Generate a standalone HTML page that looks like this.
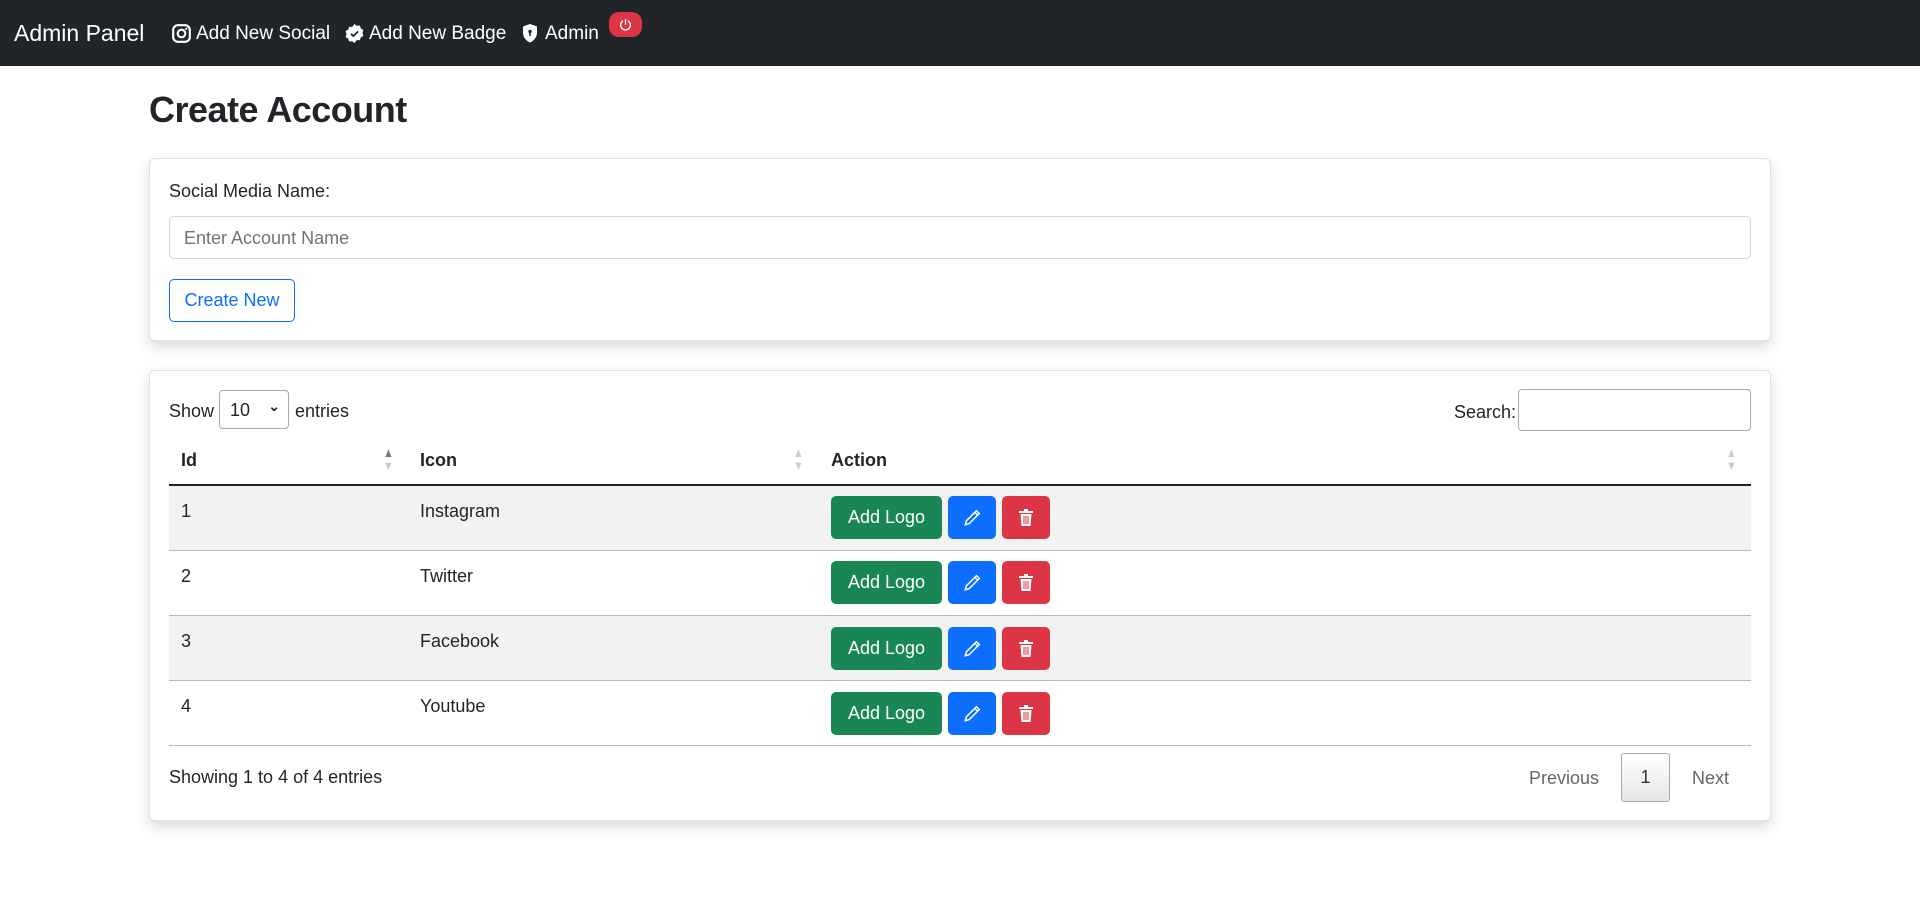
<!DOCTYPE html>
<html><head><meta charset="utf-8"><style>
*{box-sizing:border-box;margin:0;padding:0}
body{width:1920px;height:902px;background:#fff;font-family:"Liberation Sans",sans-serif;color:#212529;font-size:18px;position:relative;overflow:hidden}
.nav{position:absolute;left:0;top:0;width:1920px;height:66px;background:#212529;color:#fff}
.nav span{position:absolute;top:23px;font-size:19px;white-space:nowrap}
.abs{position:absolute}
.card{position:absolute;left:149px;width:1622px;border:1px solid #dfe1e4;border-radius:6px;box-shadow:0 6px 14px rgba(0,0,0,.15);background:#fff}
.btn{position:absolute;border-radius:5px;color:#fff;display:flex;align-items:center;justify-content:center;font-size:18px}
.g{background:#198754}.b{background:#0d6efd}.r{background:#dc3545}
.row{position:absolute;left:169px;width:1582px;height:65px;border-bottom:1px solid #bbb}
.row span{position:absolute;top:15px}
.sort{position:absolute;font-size:13px;line-height:13px;color:#ccc;transform:scaleX(.8)}
</style></head><body>
<div class="nav">
<span style="left:14px;top:20px;font-size:23px">Admin Panel</span>
<svg class="abs" style="left:172px;top:24px" width="19" height="19" viewBox="0 0 16 16"><rect x="1" y="1" width="14" height="14" rx="4" fill="none" stroke="#fff" stroke-width="1.8"/><circle cx="8" cy="8" r="3.2" fill="none" stroke="#fff" stroke-width="1.8"/><circle cx="12" cy="4" r="1" fill="#fff"/></svg>
<span style="left:196px">Add New Social</span>
<svg class="abs" style="left:345px;top:24px" width="19" height="19" viewBox="0 0 16 16"><path d="M8 0l2 1.5 2.5-.2.8 2.4 2.2 1.3-.8 2.5.8 2.5-2.2 1.3-.8 2.4-2.5-.2L8 16l-2-1.5-2.5.2-.8-2.4L.5 11l.8-2.5L.5 6l2.2-1.3.8-2.4 2.5.2z" fill="#fff"/><path d="M5 8.2l2 2 4-4" stroke="#212529" stroke-width="1.5" fill="none"/></svg>
<span style="left:369px">Add New Badge</span>
<svg class="abs" style="left:522px;top:24px" width="16" height="19" viewBox="0 0 16 19"><path d="M8 0L1 2.5v6c0 5 3.5 8.5 7 10 3.5-1.5 7-5 7-10v-6z" fill="#fff"/><circle cx="8" cy="7.5" r="1.7" fill="#212529"/><rect x="7.2" y="8" width="1.6" height="4" fill="#212529"/></svg>
<span style="left:545px">Admin</span>
<div class="abs" style="left:609px;top:12px;width:33px;height:25px;background:#dc3545;border-radius:10px"><svg class="abs" style="left:10px;top:6px" width="13" height="13" viewBox="0 0 16 16"><path d="M5 3.5a6 6 0 1 0 6 0" stroke="#fff" stroke-width="1.6" fill="none"/><path d="M8 1v7" stroke="#fff" stroke-width="1.6"/></svg></div>
</div>
<div class="abs" style="left:149px;top:89px;font-size:36px;font-weight:bold;letter-spacing:-0.5px">Create Account</div>
<div class="card" style="top:158px;height:183px">
<div class="abs" style="left:19px;top:22px">Social Media Name:</div>
<div class="abs" style="left:19px;top:57px;width:1582px;height:43px;border:1px solid #ced4da;border-radius:5px;color:#6c757d;padding:11px 14px">Enter Account Name</div>
<div class="abs" style="left:19px;top:120px;width:126px;height:43px;border:1px solid #0d6efd;border-radius:5px;color:#0d6efd;display:flex;align-items:center;justify-content:center">Create New</div>
</div>
<div class="card" style="top:370px;height:451px"></div>
<div class="abs" style="left:169px;top:401px">Show</div>
<div class="abs" style="left:219px;top:390px;width:70px;height:39px;border:1px solid #aaa;border-radius:4px;padding:9px 10px">10<span style="position:absolute;right:8px;top:7px;font-size:14px;font-weight:bold">&#8964;</span></div>
<div class="abs" style="left:295px;top:401px">entries</div>
<div class="abs" style="left:1454px;top:402px">Search:</div>
<div class="abs" style="left:1518px;top:389px;width:233px;height:42px;border:1px solid #aaa;border-radius:4px"></div>
<div class="abs" style="left:181px;top:450px;font-weight:bold">Id</div>
<div class="abs" style="left:420px;top:450px;font-weight:bold">Icon</div>
<div class="abs" style="left:831px;top:450px;font-weight:bold">Action</div>
<div class="sort" style="left:382px;top:446px"><span style="color:#777">&#9650;</span><br>&#9660;</div>
<div class="sort" style="left:792px;top:446px">&#9650;<br>&#9660;</div>
<div class="sort" style="left:1725px;top:446px">&#9650;<br>&#9660;</div>
<div class="abs" style="left:169px;top:484px;width:1582px;height:2px;background:#222"></div>
<div class="row" style="top:486px;background:#f2f2f2"><span style="left:12px">1</span><span style="left:251px">Instagram</span></div>
<div class="row" style="top:551px"><span style="left:12px">2</span><span style="left:251px">Twitter</span></div>
<div class="row" style="top:616px;background:#f2f2f2"><span style="left:12px">3</span><span style="left:251px">Facebook</span></div>
<div class="row" style="top:681px"><span style="left:12px">4</span><span style="left:251px">Youtube</span></div>
<div id="btns"></div>
<div class="abs" style="left:169px;top:767px">Showing 1 to 4 of 4 entries</div>
<div class="abs" style="left:1529px;top:768px;color:#666">Previous</div>
<div class="abs" style="left:1621px;top:753px;width:49px;height:49px;border:1px solid #aaa;border-radius:3px;background:linear-gradient(#fff,#e6e6e6);display:flex;align-items:center;justify-content:center;color:#333">1</div>
<div class="abs" style="left:1692px;top:768px;color:#666">Next</div>
<script>
var h='';[496,561,627,692].forEach(function(t){
h+='<div class="btn g" style="left:831px;top:'+t+'px;width:111px;height:43px">Add Logo</div>';
h+='<div class="btn b" style="left:948px;top:'+t+'px;width:48px;height:43px"><svg width="18" height="18" viewBox="0 0 16 16"><path d="M12 1.5l2.5 2.5-9 9L2 14l1-3.5z M10.5 3l2.5 2.5" stroke="#fff" stroke-width="1.3" fill="none"/></svg></div>';
h+='<div class="btn r" style="left:1002px;top:'+t+'px;width:48px;height:43px"><svg width="16" height="18" viewBox="0 0 16 18"><rect x="1" y="2" width="14" height="2" fill="#fff"/><rect x="6" y="0" width="4" height="2" fill="#fff"/><path d="M2.5 5h11l-1 12h-9z" fill="#fff"/><path d="M6 7v8M8 7v8M10 7v8" stroke="#dc3545" stroke-width="1"/></svg></div>';
});document.getElementById('btns').innerHTML=h;
</script>
</body></html>
